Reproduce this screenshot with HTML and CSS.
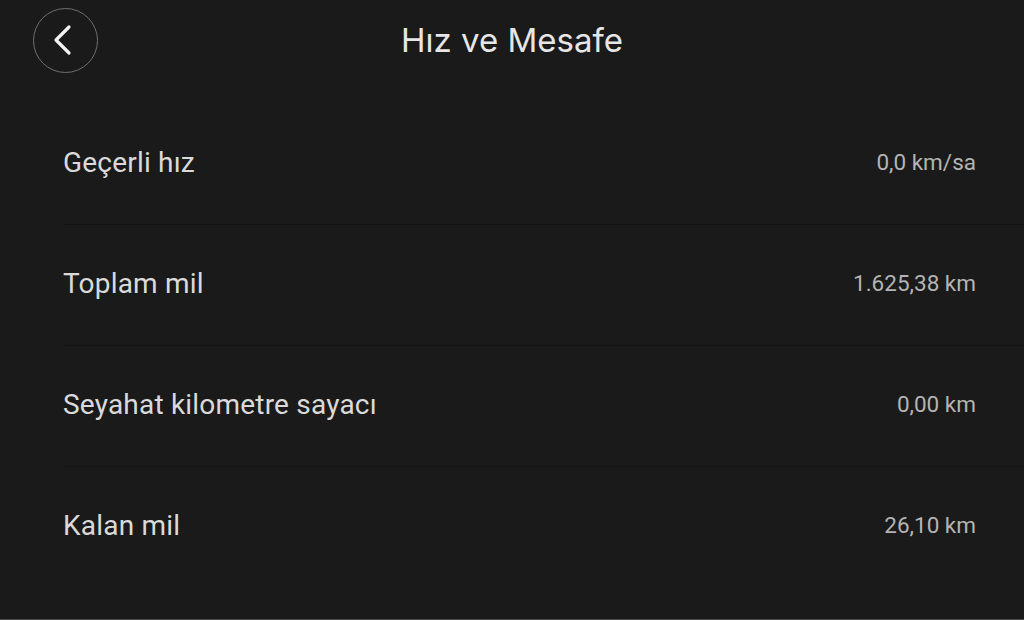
FILE: index.html
```html
<!DOCTYPE html>
<html lang="tr">
<head>
    <meta charset="UTF-8">
    <meta name="viewport" content="width=device-width, initial-scale=1.0">
    <title>Hız ve Mesafe</title>
    <link rel="stylesheet" href="styles.css">
</head>
<body>
    <div class="screen">
        <div class="header">
            <button class="back-btn" aria-label="Geri">
                <svg width="28" height="34" viewBox="0 0 28 34">
                    <polyline points="19,4 6,17 19,30" fill="none" stroke="#f2f2f2" stroke-width="3.2" stroke-linecap="round" stroke-linejoin="round"/>
                </svg>
            </button>
            <h1 class="title">Hız ve Mesafe</h1>
        </div>

        <!-- Speed and distance values -->
        <div class="list">
            <div class="row">
                <span class="label">Geçerli hız</span>
                <span class="value">0,0 km/sa</span>
            </div>
            <div class="row">
                <span class="label">Toplam mil</span>
                <span class="value">1.625,38 km</span>
            </div>
            <div class="row">
                <span class="label">Seyahat kilometre sayacı</span>
                <span class="value">0,00 km</span>
            </div>
            <div class="row">
                <span class="label">Kalan mil</span>
                <span class="value">26,10 km</span>
            </div>
        </div>
    </div>
</body>
</html>
```

FILE: styles.css
```css
body {
    margin: 0;
    background-color: #1a1a1a;
    font-family: Roboto, "Liberation Sans", sans-serif;
}

.screen {
    height: 619px;
    border-bottom: 1px solid #4a4a4a;
}

.header {
    position: relative;
    height: 82px;
    display: flex;
    align-items: center;
    padding-left: 33px;
}

.back-btn {
    width: 65px;
    height: 65px;
    margin-top: -2px;
    border-radius: 50%;
    border: 1.5px solid #6e6e6e;
    background-color: transparent;
    display: flex;
    align-items: center;
    justify-content: center;
    padding: 0 4px 0 0;
    cursor: pointer;
}

.title {
    position: absolute;
    left: 0;
    right: 0;
    top: 0;
    margin: 0;
    line-height: 80px;
    text-align: center;
    font-family: Inter, "Noto Sans", sans-serif;
    font-weight: 400;
    font-size: 33px;
    color: #e6e6e6;
    pointer-events: none;
}

.list {
    margin-top: 22px;
    padding-left: 63px;
}

.row {
    height: 120px;
    display: flex;
    align-items: center;
    justify-content: space-between;
    padding-right: 48px;
    border-bottom: 1px solid #131313;
}

.row:last-child {
    border-bottom: none;
}

.label {
    font-size: 28px;
    letter-spacing: 0.2px;
    color: #dadada;
    margin-top: -4px;
}

.value {
    font-size: 22.5px;
    color: #b4b4b4;
    margin-top: -4px;
}
```
